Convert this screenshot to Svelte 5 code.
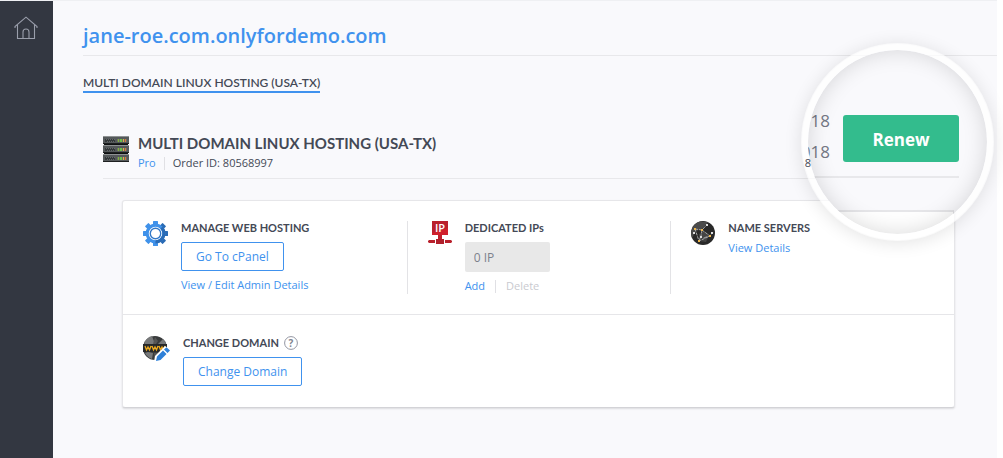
<script lang="ts">
  let domain = "jane-roe.com.onlyfordemo.com";
  let plan = "MULTI DOMAIN LINUX HOSTING (USA-TX)";
  let orderId = "80568997";
  let teeth = [0, 45, 90, 135, 180, 225, 270, 315];
  let units = [0, 9, 18];
</script>

<div class="page">
  <nav class="sidebar">
    <a href="#home" aria-label="Home">
      <svg width="24" height="24" viewBox="0 0 24 24" fill="none" stroke="#9a9eab" stroke-width="1.1">
        <path d="M1 12V10.500L12 1.200L23 10.500V12M3.500 9V22.500H20.500V9M9 22.500V16Q9 13 12 13Q15 13 15 16V22.500" />
      </svg>
    </a>
  </nav>

  <main>
    <h1>{domain}</h1>
    <div class="tabs">
      <a class="tab" href="#plan">{plan}</a>
    </div>

    <section class="order">
      <header>
        <svg width="26" height="26" viewBox="0 0 26 26">
          <rect x="1" width="24" height="26" fill="#0f1112" />
          {#each units as y}
            <rect {y} width="26" height="8" fill="#55595b" />
            <rect {y} width="26" height="1" fill="#8f9293" />
            <rect y={y + 7} width="26" height="1" fill="#1d1f20" />
            <rect x="2" y={y + 3} width="10" height="3" fill="#34383a" />
            <path d="M3 {y + 3.5}H12M4 {y + 5.5}H12" stroke="#65696a" stroke-dasharray="1 1" />
            <rect x="14" y={y + 3} width="10" height="3" fill="#6a6e62" />
            <rect x="15" y={y + 3} width="1" height="3" fill="#7fb53a" />
            <rect x="17" y={y + 3} width="2" height="3" fill="#6cc04a" />
            <rect x="20" y={y + 3} width="1" height="3" fill="#e0b04a" />
            <rect x="22" y={y + 3} width="1" height="3" fill="#dc7440" />
          {/each}
        </svg>
        <div>
          <h2>{plan}</h2>
          <div class="meta">
            <a href="#pro">Pro</a>
            <span class="bar"></span>
            <span>Order ID: {orderId}</span>
            <span class="expiry">8</span>
          </div>
        </div>
      </header>

      <div class="card">
        <div class="row">
          <div class="cell">
            <svg width="25" height="25" viewBox="0 0 24 24">
              {#each teeth as angle}
                <rect
                  x="9.600"
                  y="0"
                  width="4.800"
                  height="5"
                  rx="0.500"
                  fill={angle > 0 && angle < 180 ? "#2a6bb5" : "#4092ea"}
                  transform="rotate({angle} 12 12)"
                />
              {/each}
              <circle cx="12" cy="12" r="8" fill="#fff" stroke="#4092ea" stroke-width="3" />
              <path d="M17.700 6.300A8 8 0 0 1 12 20" fill="none" stroke="#2a6bb5" stroke-width="3" />
              <circle cx="12" cy="12" r="5" fill="#fff" stroke="#3278c8" stroke-width="1.300" />
            </svg>
            <div class="info">
              <h3>MANAGE WEB HOSTING</h3>
              <button class="outline">Go To cPanel</button>
              <div class="links"><a href="#admin">View / Edit Admin Details</a></div>
            </div>
          </div>

          <div class="cell">
            <svg width="24" height="24" viewBox="0 0 24 24">
              <path d="M4 0H20V14H4Z" fill="#d0202c" />
              <path d="M4 0H20V7L4 12Z" fill="#b9202c" />
              <path d="M10 14H14V18H10Z" fill="#c0202c" />
              <path d="M8 18H16V23H8Z" fill="#b0202c" />
              <path d="M1 19H7V22H1L0 21V20ZM17 19H23L24 20V21L23 22H17Z" fill="#b9202c" />
              <text x="12" y="11" text-anchor="middle" font-family="Open Sans, sans-serif" font-size="11" font-weight="600" fill="#fff">IP</text>
            </svg>
            <div class="info">
              <label for="ips"><h3>DEDICATED IPs</h3></label>
              <input id="ips" value="0 IP" readonly />
              <div class="links">
                <a href="#add">Add</a>
                <span class="bar"></span>
                <span class="off">Delete</span>
              </div>
            </div>
          </div>

          <div class="cell">
            <svg width="24" height="24" viewBox="0 0 24 24">
              <circle cx="12" cy="12" r="12" fill="#292929" />
              <path d="M1 8Q3 2 9 0.500L17 1L13 7L5 10L1 17Q-1 12 1 8Z" fill="#4b4b4b" />
              <path d="M8 13L13 10L18 14L15 21L8 20Z" fill="#444" />
              <path d="M4 8L11 9L16 4M11 9L19 15L8 20L4 8M8 20L10 15L11 9M22 11L19 15L12 17" fill="none" stroke="#a5a5a5" stroke-width="1" stroke-dasharray="3 1" />
              <path d="M15 3H17V5H15ZM2 11H4V13H2ZM20 11H22V13H20ZM9 15H11V17H9Z" fill="#ddd" />
              <path d="M3 7H5V9H3ZM10 8H12V10H10ZM18 14H20V16H18ZM7 19H9V21H7Z" fill="#efb84d" />
            </svg>
            <div class="info">
              <h3>NAME SERVERS</h3>
              <a class="details" href="#servers">View Details</a>
            </div>
          </div>
        </div>

        <div class="row second">
          <div class="cell">
            <svg width="27" height="26" viewBox="0 0 27 26">
              <circle cx="12" cy="12" r="12" fill="#393b3c" />
              <path d="M1 7Q4 1 9 0L12 8H2ZM15 8L20 3Q22 5 23 8ZM5 16L10 17L9 23Q4 21 2 17Z" fill="#77797a" />
              <path d="M12 1L15 5L13 8H10ZM11 17H16L12 24Z" fill="#555" />
              <rect y="8" width="24" height="8" fill="#27292a" />
              <path d="M2 10L3.500 14L5 11L6.500 14L8 10M9 10L10.500 14L12 11L13.500 14L15 10M16 10L17.500 14L19 11L20.500 14L22 10" fill="none" stroke="#eba91f" stroke-width="1.300" />
              <path d="M11 26L12 20L22 10L28 14L18 26Z" fill="#fff" />
              <path d="M13 25L14 20.500L20 14.500L23.500 18L17.500 24ZM21 13.500L23.500 11.200L27 14.500L24.500 17Z" fill="#2e80d8" />
            </svg>
            <div class="info">
              <h3>
                CHANGE DOMAIN
                <svg width="14" height="14" viewBox="0 0 14 14">
                  <circle cx="7" cy="7" r="6.400" fill="none" stroke="#9396a2" />
                  <text x="7" y="11" text-anchor="middle" font-family="Open Sans, sans-serif" font-size="10" fill="#81848f">?</text>
                </svg>
              </h3>
              <button class="outline">Change Domain</button>
            </div>
          </div>
        </div>
      </div>
    </section>
  </main>

  <div class="lens">
    <div class="lens-row">
      <div class="dates">
        <span>18</span>
        <span>018</span>
      </div>
      <button class="renew">Renew</button>
    </div>
    <div class="lens-card"></div>
  </div>
</div>

<style>
  :global(body) {
    background: #fff;
  }

  .page {
    position: relative;
    display: flex;
    min-height: 100vh;
    box-sizing: border-box;
    margin-right: 6px;
    border-top: 1px solid #eff0f3;
    background: #f9f9fc;
    font: 11px/16px "Open Sans", sans-serif;
    color: #444956;
  }
  a {
    color: #4092ee;
    text-decoration: none;
  }
  h1,
  h2,
  h3 {
    margin: 0;
  }
  svg {
    flex: none;
  }

  .sidebar {
    flex: none;
    width: 53px;
    box-sizing: border-box;
    padding: 15px 0 0 14px;
    background: #333741;
  }
  main {
    flex: 1;
    padding-left: 30px;
  }
  h1 {
    padding: 20px 0 5px;
    border-bottom: 1px solid #e8e8eb;
    font-size: 20px;
    line-height: 29px;
    font-weight: 600;
    color: #4092ee;
  }
  .tabs {
    display: flex;
    padding-top: 18px;
  }
  .tab {
    border-bottom: 2px solid #4092ee;
    font: 600 12px/17px Lato, sans-serif;
    color: #444956;
  }

  .order {
    padding: 42px 24px 0 20px;
  }
  header {
    display: flex;
    align-items: flex-end;
    gap: 9px;
    padding-bottom: 7px;
    border-bottom: 1px solid #e8e8eb;
  }
  header svg {
    margin-bottom: 9px;
  }
  header > div {
    flex: 1;
  }
  h2 {
    font: 700 15px/16px Lato, sans-serif;
  }
  .meta {
    display: flex;
    align-items: center;
    gap: 8px;
    padding-top: 4px;
  }
  .bar {
    width: 1px;
    height: 13px;
    background: #e0e0e4;
  }
  .expiry {
    z-index: 1;
    margin: 0 162px 0 auto;
  }

  .card {
    margin: 21px 18px 0 19px;
    border: 1px solid #e6e6e9;
    border-bottom-color: #d3d3d7;
    border-radius: 3px;
    background: #fff;
    box-shadow: 0 1px 2px #0000001f;
  }
  .row {
    display: grid;
    grid-template-columns: repeat(3, 1fr);
    padding: 20px;
  }
  .row + .row {
    border-top: 1px solid #e6e6e9;
  }
  .cell {
    display: flex;
    gap: 13px;
    height: 73px;
  }
  .row:first-child .cell + .cell {
    padding-left: 20px;
    border-left: 1px solid #e3e3e6;
  }
  .second .cell {
    height: 51px;
    padding-top: 1px;
  }
  .info {
    display: flex;
    flex-direction: column;
    align-items: flex-start;
  }
  h3 {
    display: flex;
    align-items: center;
    gap: 5px;
    height: 14px;
    margin-bottom: 7px;
    font: 700 11px/14px Lato, sans-serif;
  }
  .outline {
    height: 29px;
    padding: 0 14px;
    border: 1px solid #4092ee;
    border-radius: 2px;
    background: #fff;
    font: 12px/16px "Open Sans", sans-serif;
    color: #4092ee;
  }
  input {
    width: 85px;
    height: 31px;
    box-sizing: border-box;
    padding: 0 9px;
    border: 0;
    border-radius: 2px;
    background: #e8e8e8;
    font: 12px/16px "Open Sans", sans-serif;
    color: #7d818c;
  }
  .links {
    display: flex;
    align-items: center;
    gap: 10px;
    padding-top: 6px;
  }
  .off {
    color: #c9cacf;
  }
  .details {
    line-height: 12px;
  }

  .lens {
    position: absolute;
    top: 42px;
    right: 3px;
    width: 193px;
    height: 198px;
    box-sizing: border-box;
    border: 7px solid #ffffffb8;
    border-radius: 50%;
    background: #f9f9fc padding-box;
    box-shadow: 0 2px 18px #0000001c;
    overflow: hidden;
  }
  .lens::after {
    content: "";
    position: absolute;
    inset: 0;
    border-radius: 50%;
    box-shadow: inset 0 0 22px #00000026;
    pointer-events: none;
  }
  .lens-row {
    display: flex;
    align-items: flex-end;
    justify-content: flex-end;
    gap: 13px;
    margin-right: 28px;
    padding: 55px 0 14px;
    border-bottom: 2px solid #e8e8eb;
  }
  .dates {
    display: flex;
    flex-direction: column;
    align-items: flex-end;
    height: 57px;
    font-size: 17px;
    line-height: 31px;
    color: #747885;
  }
  .renew {
    flex: none;
    width: 116px;
    height: 47px;
    padding-top: 4px;
    border: 0;
    border-radius: 3px;
    background: #33bc8d;
    font: 700 17px/24px "Open Sans", sans-serif;
    color: #fff;
  }
  .lens-card {
    height: 40px;
    margin: 32px 33px 0 0;
    border-top: 2px solid #e6e6e9;
    border-right: 1px solid #e0e0e4;
    background: #fff;
  }
</style>
